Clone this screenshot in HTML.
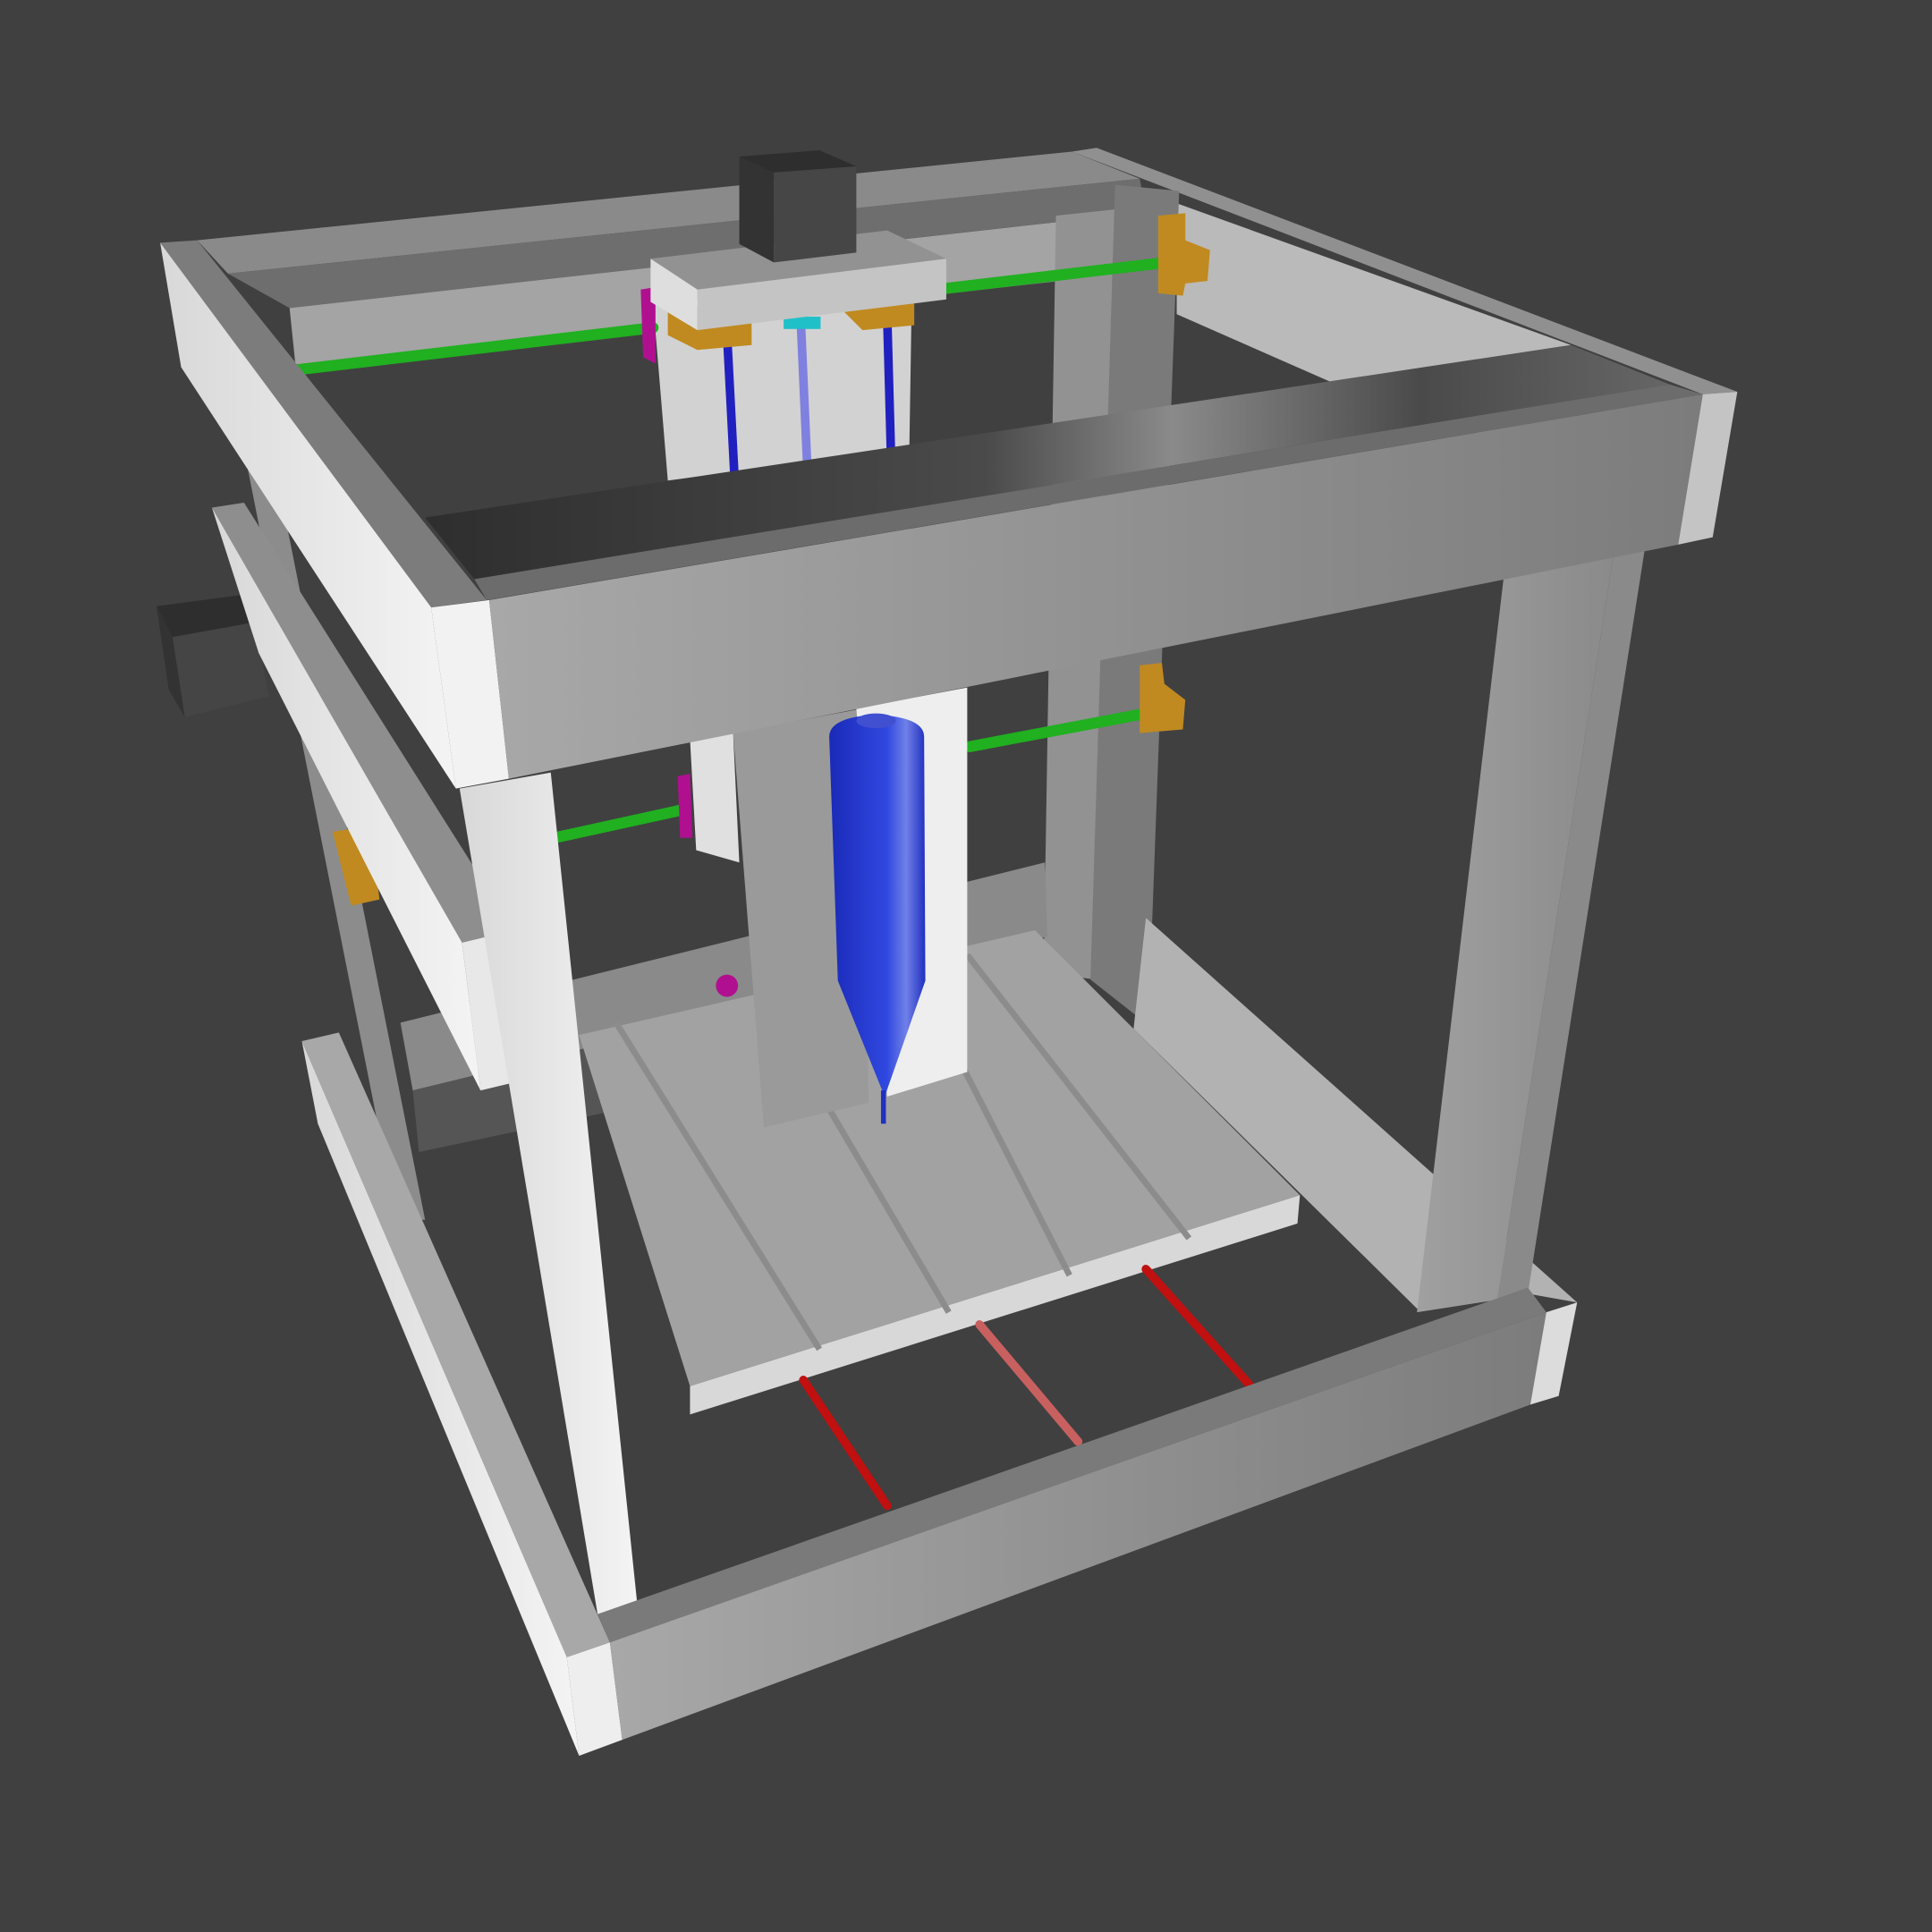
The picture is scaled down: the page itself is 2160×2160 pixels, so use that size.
<!DOCTYPE html>
<html><head><meta charset="utf-8"><style>html,body{margin:0;padding:0;background:#404040}svg{display:block}</style></head><body>
<svg width="2160" height="2160" viewBox="0 0 1568 1568" xmlns="http://www.w3.org/2000/svg">
<defs>
<linearGradient id="fb" x1="0" x2="1"><stop offset="0" stop-color="#a8a8a8"/><stop offset="1" stop-color="#7c7c7c"/></linearGradient>
<linearGradient id="dk" x1="0" x2="1"><stop offset="0" stop-color="#2e2e2e"/><stop offset="0.45" stop-color="#4a4a4a"/><stop offset="0.6" stop-color="#8a8a8a"/><stop offset="0.8" stop-color="#4a4a4a"/><stop offset="1" stop-color="#666"/></linearGradient>
<linearGradient id="wh" x1="0" x2="1"><stop offset="0" stop-color="#d8d8d8"/><stop offset="1" stop-color="#f4f4f4"/></linearGradient>
<linearGradient id="bl" x1="0" x2="1"><stop offset="0" stop-color="#1a2ab8"/><stop offset="0.6" stop-color="#3048e0"/><stop offset="0.8" stop-color="#7080e8"/><stop offset="1" stop-color="#2030c0"/></linearGradient>
<linearGradient id="pf" x1="0" x2="1"><stop offset="0" stop-color="#a0a0a0"/><stop offset="1" stop-color="#8a8a8a"/></linearGradient>
</defs>
<rect width="1568" height="1568" fill="#404040"/>
<!-- back beam -->
<polygon points="160,195 870,123 925,145 185,222" fill="#8a8a8a"/>
<polygon points="185,222 925,145 930,172 235,250" fill="#6e6e6e"/>
<polygon points="235,250 860,180 860,228 240,298" fill="#a4a4a4"/>
<!-- right back beam inner -->
<polygon points="890,120 1410,318 1382,320 870,123" fill="#909090"/>
<polygon points="955,165 1275,280 1080,310 955,255" fill="#bababa"/>
<!-- right back posts -->
<polygon points="857,175 905,170 890,795 847,790" fill="#929292"/>
<polygon points="905,150 957,155 932,832 885,795" fill="#7a7a7a"/>
<!-- left back post -->
<polygon points="200,375 222,372 345,990 322,990" fill="#8c8c8c"/>
<!-- back bottom beam -->
<polygon points="325,830 848,700 850,760 335,885" fill="#8a8a8a"/>
<polygon points="335,885 600,820 600,880 340,935" fill="#555"/>
<!-- right bottom side beam -->
<polygon points="930,745 1280,1057 1240,1050 1150,1062 920,835" fill="#b2b2b2"/>
<!-- bed -->
<polygon points="470,840 840,755 1055,970 560,1125" fill="#a2a2a2"/>
<polygon points="560,1125 1055,970 1053,993 560,1148" fill="#d8d8d8"/>
<g stroke="#8c8c8c" stroke-width="5"><line x1="500" y1="830" x2="665" y2="1095"/><line x1="620" y1="810" x2="770" y2="1065"/><line x1="740" y1="785" x2="868" y2="1035"/><line x1="785" y1="775" x2="965" y2="1005"/></g>
<!-- red rods -->
<g stroke-width="7" stroke-linecap="round"><line x1="652" y1="1120" x2="720" y2="1222" stroke="#c01010"/><line x1="795" y1="1075" x2="875" y2="1170" stroke="#c86060"/><line x1="930" y1="1030" x2="1015" y2="1125" stroke="#c01010"/></g>
<!-- Z carriage upper plate -->
<polygon points="530,245 740,240 738,365 542,390" fill="#d2d2d2"/>
<g stroke-width="7"><line x1="590" y1="270" x2="596" y2="385" stroke="#2020c0"/><line x1="650" y1="262" x2="655" y2="375" stroke="#8080e0"/><line x1="720" y1="255" x2="723" y2="365" stroke="#2020c0"/></g>
<!-- green rods -->
<g stroke="#20b020" stroke-width="9" stroke-linecap="round"><line x1="242" y1="300" x2="530" y2="266"/><line x1="768" y1="234" x2="955" y2="212"/><line x1="450" y1="680" x2="555" y2="657"/><line x1="787" y1="606" x2="935" y2="578"/></g>
<!-- brackets -->
<g fill="#c08a20"><polygon points="940,175 962,173 962,195 982,203 980,228 962,230 960,240 940,238"/><polygon points="925,540 943,538 945,555 962,568 960,592 925,595"/><polygon points="270,675 290,672 305,705 308,730 285,735"/><polygon points="542,250 610,245 610,280 566,284 542,272"/><polygon points="680,248 742,244 742,264 700,268"/></g>
<rect x="636" y="257" width="30" height="10" fill="#20c0c8"/>
<polygon points="520,235 532,233 532,295 522,290" fill="#b01090"/>
<polygon points="550,630 560,628 562,680 552,680" fill="#b01090"/>
<circle cx="590" cy="800" r="9" fill="#b01090"/>
<!-- top carriage -->
<polygon points="528,210 720,187 768,210 566,235" fill="#929292"/>
<polygon points="566,235 768,210 768,243 566,268" fill="#c4c4c4"/>
<polygon points="528,210 566,235 566,268 528,245" fill="#dedede"/>
<polygon points="600,127 665,122 695,135 628,140" fill="#2e2e2e"/>
<polygon points="628,140 695,135 695,205 628,213" fill="#464646"/>
<polygon points="600,127 628,140 628,213 600,198" fill="#333"/>
<!-- left motor -->
<polygon points="127,492 195,483 207,505 140,517" fill="#2e2e2e"/>
<polygon points="140,517 207,505 218,565 150,582" fill="#454545"/>
<polygon points="127,492 140,517 150,582 137,560" fill="#333"/>
<!-- Z plate front -->
<polygon points="595,595 700,575 705,895 620,915" fill="#9a9a9a"/>
<polygon points="695,575 785,558 785,870 720,890" fill="#eeeeee"/>
<polygon points="560,600 595,595 600,700 565,690" fill="#e0e0e0"/>
<!-- tool -->
<path d="M673,598 Q673,582 711,580 Q750,582 750,598 L751,796 L718,890 L680,796 Z" fill="url(#bl)"/>
<ellipse cx="711" cy="585" rx="16" ry="6" fill="#4050d0"/>
<line x1="717" y1="885" x2="717" y2="912" stroke="#2030c0" stroke-width="4"/>
<!-- left middle rail -->
<polygon points="172,412 198,408 417,755 375,765" fill="#8e8e8e"/>
<polygon points="172,412 375,765 390,885 210,530" fill="url(#wh)"/>
<polygon points="375,765 417,755 432,875 390,885" fill="#e8e8e8"/>
<!-- front left post -->
<polygon points="373,640 447,627 517,1300 485,1310" fill="url(#wh)"/>
<!-- front right post -->
<polygon points="1222,455 1310,447 1215,1055 1150,1065" fill="url(#pf)"/>
<polygon points="1310,447 1335,445 1240,1050 1215,1055" fill="#8a8a8a"/>
<!-- bottom frame -->
<polygon points="245,845 275,838 495,1333 460,1345" fill="#a8a8a8"/>
<polygon points="245,845 460,1345 470,1425 258,912" fill="url(#wh)"/>
<polygon points="460,1345 495,1333 505,1412 470,1425" fill="#eeeeee"/>
<polygon points="485,1310 1240,1045 1255,1065 495,1333" fill="#7a7a7a"/>
<polygon points="495,1333 1255,1065 1242,1140 505,1412" fill="url(#fb)"/>
<polygon points="1255,1065 1280,1057 1265,1133 1242,1140" fill="#dcdcdc"/>
<!-- top frame left beam -->
<polygon points="130,197 160,195 395,487 350,493" fill="#7c7c7c"/>
<polygon points="130,197 350,493 370,640 147,298" fill="url(#wh)"/>
<polygon points="350,493 397,487 413,632 370,640" fill="#f2f2f2"/>
<!-- front beam -->
<polygon points="345,420 1275,280 1355,312 385,470" fill="url(#dk)"/>
<polygon points="385,470 1355,312 1382,320 395,487" fill="#6c6c6c"/>
<polygon points="397,487 1382,320 1362,442 413,632" fill="url(#fb)"/>
<polygon points="1382,320 1410,318 1390,436 1362,442" fill="#c4c4c4"/>
</svg>
</body></html>
